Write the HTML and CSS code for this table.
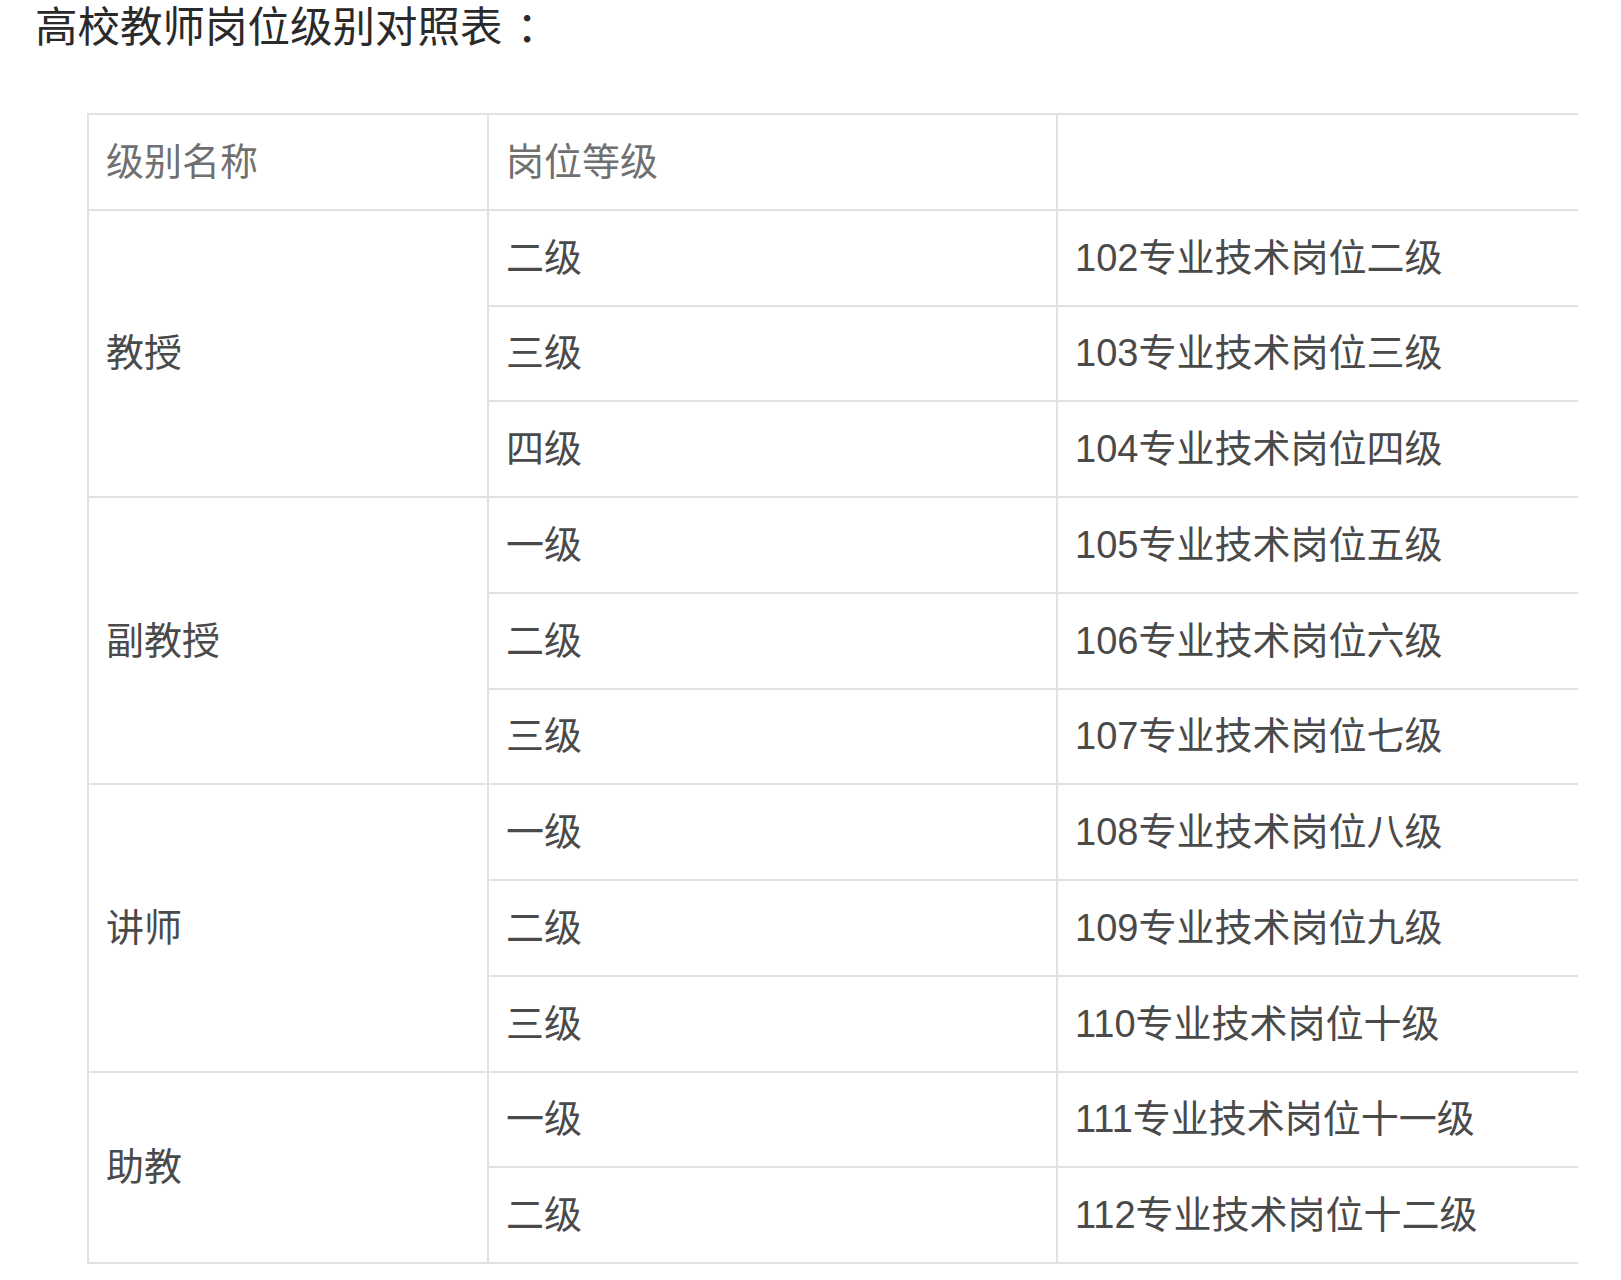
FILE: index.html
```html
<!DOCTYPE html>
<html lang="zh-CN">
<head>
<meta charset="utf-8">
<title>高校教师岗位级别对照表</title>
<link rel="stylesheet" href="styles.css">
</head>
<body>
<h1 class="title">高校教师岗位级别对照表<span class="colon">：</span></h1>
<table class="grade-table">
  <colgroup>
    <col class="c1"><col class="c2"><col class="c3">
  </colgroup>
  <tr class="head">
    <td>级别名称</td><td>岗位等级</td><td class="last"></td>
  </tr>
  <tr><td rowspan="3">教授</td><td>二级</td><td class="last">102专业技术岗位二级</td></tr>
  <tr><td>三级</td><td class="last">103专业技术岗位三级</td></tr>
  <tr><td>四级</td><td class="last">104专业技术岗位四级</td></tr>
  <tr><td rowspan="3">副教授</td><td>一级</td><td class="last">105专业技术岗位五级</td></tr>
  <tr><td>二级</td><td class="last">106专业技术岗位六级</td></tr>
  <tr><td>三级</td><td class="last">107专业技术岗位七级</td></tr>
  <tr><td rowspan="3">讲师</td><td>一级</td><td class="last">108专业技术岗位八级</td></tr>
  <tr><td>二级</td><td class="last">109专业技术岗位九级</td></tr>
  <tr><td>三级</td><td class="last">110专业技术岗位十级</td></tr>
  <tr><td rowspan="2">助教</td><td>一级</td><td class="last">111专业技术岗位十一级</td></tr>
  <tr><td>二级</td><td class="last">112专业技术岗位十二级</td></tr>
</table>
</body>
</html>
```

FILE: styles.css
```css
html, body {
  margin: 0;
  padding: 0;
  background: #ffffff;
}

body {
  font-family: "Liberation Sans", "Noto Sans CJK SC", sans-serif;
  width: 1621px;
  height: 1280px;
  overflow: hidden;
}

.title {
  margin: 0;
  padding: 0 0 0 35px;
  font-family: "Noto Sans CJK JP", "Noto Sans CJK SC", sans-serif;
  font-size: 42.5px;
  line-height: 48px;
  font-weight: 400;
  color: #2a2a2a;
}

.colon {
  padding-left: 14px;
}

.grade-table {
  margin: 65px 0 0 87px;
  border-collapse: collapse;
  table-layout: fixed;
  width: 1490px;
  font-size: 38px;
  color: #4a4a4a;
}

.c1 { width: 400px; }
.c2 { width: 569px; }
.c3 { width: 521px; }

.grade-table td {
  height: 93.75px;
  padding: 0 17px;
  border: 2px solid #e1e1e1;
  vertical-align: middle;
  white-space: nowrap;
  font-family: "Liberation Sans", "Noto Sans CJK SC", sans-serif;
  line-height: 1;
}

.grade-table td.last {
  border-right: none;
}

.grade-table tr.head td {
  color: #707070;
}
```
